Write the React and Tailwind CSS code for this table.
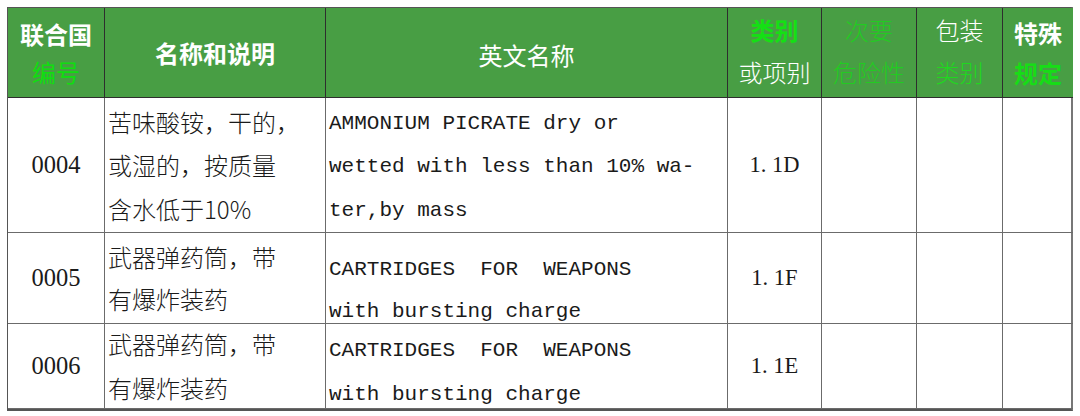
import React from "react";

const cjk = { fontFamily: '"Noto Sans CJK SC", "Noto Sans", sans-serif' };
const mono = { fontFamily: '"Liberation Mono", "DejaVu Sans Mono", monospace' };
const serif = { fontFamily: '"Liberation Serif", "Noto Sans CJK SC", serif' };

const H = "bg-[#489e44] border-r border-b border-[#2e2e2e] flex flex-col items-center justify-center text-[24px]";
const C = "border-r border-b border-[#6b6b6b] flex flex-col justify-center text-[#1a1a1a]";

const rows = [
  {
    no: "0004",
    cn: ["苦味酸铵，干的，", "或湿的，按质量", "含水低于10%"],
    en: ["AMMONIUM PICRATE dry or", "wetted with less than 10% wa-", "ter,by mass"],
    cls: "1. 1D",
    enPad: "pt-[4px]",
    lh: "leading-[43.5px]",
  },
  {
    no: "0005",
    cn: ["武器弹药筒，带", "有爆炸装药"],
    en: ["CARTRIDGES  FOR  WEAPONS", "with bursting charge"],
    cls: "1. 1F",
    enPad: "pt-[26px]",
    lh: "leading-[42px]",
  },
  {
    no: "0006",
    cn: ["武器弹药筒，带", "有爆炸装药"],
    en: ["CARTRIDGES  FOR  WEAPONS", "with bursting charge"],
    cls: "1. 1E",
    enPad: "pt-[14px]",
    lh: "leading-[44px]",
  },
];

export default function App() {
  return (
    <div className="w-[1080px] h-[416px] bg-white pt-[7px] pl-[7px]">
      <div className="grid grid-cols-[97px_221px_402px_94px_95px_86px_70px] grid-rows-[90px_135px_91px_85px] w-[1066px] border-l border-t border-[#555] border-r-2 border-b-2 border-r-[#777] border-b-[#555]" style={cjk}>
        <div className={H + " leading-[38px]"}>
          <span className="font-bold text-white">联合国</span>
          <span className="text-[#10dd10]">编号</span>
        </div>
        <div className={H}>
          <span className="font-bold text-white">名称和说明</span>
        </div>
        <div className={H}>
          <span className="font-normal text-white pt-[4px]">英文名称</span>
        </div>
        <div className={H + " leading-[42px] pb-[4px]"}>
          <span className="text-[#14e014] font-bold">类别</span>
          <span className="font-light text-white">或项别</span>
        </div>
        <div className={H + " leading-[42px] pb-[4px]"}>
          <span className="font-light text-[#22cb22]">次要</span>
          <span className="font-light text-[#22cb22]">危险性</span>
        </div>
        <div className={H + " leading-[42px] pb-[4px]"}>
          <span className="font-light text-white">包装</span>
          <span className="font-light text-[#1fd81f]">类别</span>
        </div>
        <div className={H + " leading-[40px] border-r-0"}>
          <span className="font-bold text-white">特殊</span>
          <span className="font-bold text-[#16dd16]">规定</span>
        </div>

        {rows.map((r, i) => (
          <React.Fragment key={i}>
            <div className={C + " items-center text-[24.5px]"} style={serif}>
              {r.no}
            </div>
            <div className={C + " pl-[3px] text-[24px] font-light " + r.lh}>
              {r.cn.map((t, j) => (
                <div key={j} className="whitespace-pre">{t}</div>
              ))}
            </div>
            <div className={C + " pl-[3px] text-[21px] " + r.lh + " " + r.enPad} style={mono}>
              {r.en.map((t, j) => (
                <div key={j} className="whitespace-pre">{t}</div>
              ))}
            </div>
            <div className={C + " items-center text-[22.5px]"} style={serif}>
              <span className="whitespace-pre">{r.cls}</span>
            </div>
            <div className={C}></div>
            <div className={C}></div>
            <div className={C + " border-r-0"}></div>
          </React.Fragment>
        ))}
      </div>
    </div>
  );
}
